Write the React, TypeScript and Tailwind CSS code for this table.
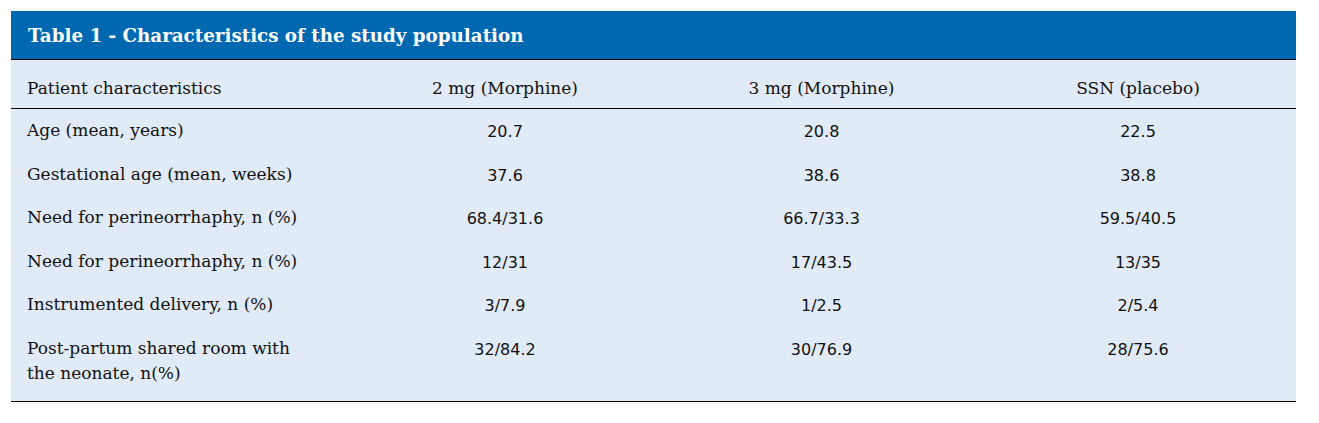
import React from "react";

const serif = { fontFamily: '"DejaVu Serif", serif' };

const rows: { label: string[]; vals: string[]; h: string }[] = [
  { label: ["Age (mean, years)"], vals: ["20.7", "20.8", "22.5"], h: "h-[44px]" },
  { label: ["Gestational age (mean, weeks)"], vals: ["37.6", "38.6", "38.8"], h: "h-[43px]" },
  { label: ["Need for perineorrhaphy, n (%)"], vals: ["68.4/31.6", "66.7/33.3", "59.5/40.5"], h: "h-[44px]" },
  { label: ["Need for perineorrhaphy, n (%)"], vals: ["12/31", "17/43.5", "13/35"], h: "h-[43px]" },
  { label: ["Instrumented delivery, n (%)"], vals: ["3/7.9", "1/2.5", "2/5.4"], h: "h-[44px]" },
  {
    label: ["Post-partum shared room with", "the neonate, n(%)"],
    vals: ["32/84.2", "30/76.9", "28/75.6"],
    h: "h-[74px]",
  },
];

export default function App() {
  return (
    <div className="w-[1319px] h-[423px] bg-white pt-[11px] pl-[11px]">
      <div className="w-[1285px] bg-[#e1ebf7] text-[#111]">
        <div className="h-[48px] bg-[#0068b0] flex items-center pl-[17px] pt-[1px]">
          <span className="text-white font-bold text-[18.3px]" style={serif}>
            Table 1 - Characteristics of the study population
          </span>
        </div>
        <div className="grid grid-cols-[336px_316px_317px_316px] h-[50px] border-t border-b border-black text-[17px] leading-[25px]" style={serif}>
          <div className="pl-[16px] pt-[16px]">Patient characteristics</div>
          <div className="text-center pt-[16px]">2 mg (Morphine)</div>
          <div className="text-center pt-[16px]">3 mg (Morphine)</div>
          <div className="text-center pt-[16px]">SSN (placebo)</div>
        </div>
        <div className="border-b border-black">
          {rows.map((r, i) => (
            <div key={i} className={`grid grid-cols-[336px_316px_317px_316px] ${r.h} leading-[25px]`}>
              <div className="pl-[16px] pt-[9px] text-[17px]" style={serif}>
                {r.label.map((l, j) => (
                  <div key={j}>{l}</div>
                ))}
              </div>
              {r.vals.map((v, j) => (
                <div
                  key={j}
                  className="text-center pt-[10px] text-[16px]"
                  style={{ fontFamily: '"DejaVu Sans", sans-serif' }}
                >
                  {v}
                </div>
              ))}
            </div>
          ))}
        </div>
      </div>
    </div>
  );
}
